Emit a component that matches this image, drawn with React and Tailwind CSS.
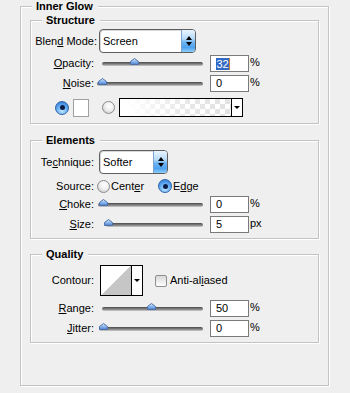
import React from "react";

const U = ({ children }) => (
  <span className="underline underline-offset-[1px] decoration-[1px]">{children}</span>
);

function Group({ title, className, children }) {
  return (
    <div className={"relative border border-[#c3c3c3] shadow-[inset_1px_1px_0_#fff,1px_1px_0_#fff] " + className}>
      <span className="absolute left-[11px] top-[-7px] h-[12px] bg-[#efefef] pl-[4px] pr-[5px] text-[11px] leading-[12px] font-bold whitespace-nowrap">
        {title}
      </span>
      {children}
    </div>
  );
}

function Label({ children, w = "w-[63px]" }) {
  return <span className={"shrink-0 text-right whitespace-nowrap " + w}>{children}</span>;
}

function Select({ value, className }) {
  return (
    <div className={"flex h-[24px] rounded-[4px] border border-[#5e5e5e] bg-white overflow-hidden shadow-[inset_1px_1px_0_#d8d8d8] " + className}>
      <span className="flex-1 pl-[3px] pt-[1px] leading-[21px]">{value}</span>
      <span className="w-[14px] flex flex-col items-center justify-center gap-[2px] border-l border-[#7ea2d0] bg-[linear-gradient(to_bottom,#eaf5fe_0%,#b6daf8_40%,#6db4f3_55%,#4fa2ef_80%,#8fd0fb_100%)]">
        <span className="w-0 h-0 border-x-[3px] border-x-transparent border-b-[4px] border-b-black" />
        <span className="w-0 h-0 border-x-[3px] border-x-transparent border-t-[4px] border-t-black" />
      </span>
    </div>
  );
}

function Slider({ track, knob }) {
  return (
    <div className="relative ml-[3px] w-[106px] h-[17px] flex items-center shrink-0">
      <div className={"h-[4px] rounded-full bg-[linear-gradient(to_bottom,#4a4a4a,#8a8a8a_60%,#cfcfcf)] " + track} />
      <svg className={"absolute top-[3px] " + knob} width="9" height="7" viewBox="0 0 9 7">
        <defs>
          <linearGradient id="kn" x1="0" y1="0" x2="0" y2="1">
            <stop offset="0" stopColor="#d9ecff" />
            <stop offset="0.5" stopColor="#8db8ec" />
            <stop offset="1" stopColor="#4b7fcf" />
          </linearGradient>
        </defs>
        <path d="M4.5 0.5 L8.5 3.5 V6.5 H0.5 V3.5 Z" fill="url(#kn)" stroke="#4c6fa8" strokeWidth="1" />
      </svg>
    </div>
  );
}

function NumBox({ children }) {
  return (
    <div className="ml-[7px] w-[39px] h-[17px] shrink-0 border border-[#7a7a7a] bg-white pl-[5px] leading-[15px] flex items-center">
      {children}
    </div>
  );
}

function SliderRow({ label, track, knob, value, unit = "%", className }) {
  return (
    <div className={"flex items-center h-[17px] " + className}>
      <Label>{label}</Label>
      <Slider track={track} knob={knob} />
      <NumBox>{value}</NumBox>
      <span className="ml-[1px] self-start mt-[1px] leading-[13px]">{unit}</span>
    </div>
  );
}

function Radio({ on, className = "" }) {
  if (on) {
    return (
      <span className={"shrink-0 w-[14px] h-[14px] rounded-full border border-[#2f63a8] bg-[radial-gradient(circle_at_50%_75%,#bfe6ff_0%,#5aa6f0_55%,#2a6ccc_100%)] flex items-center justify-center " + className}>
        <span className="w-[5px] h-[5px] rounded-full bg-[#0c1c48]" />
      </span>
    );
  }
  return (
    <span className={"shrink-0 w-[13px] h-[13px] rounded-full border border-[#8c8c8c] bg-[radial-gradient(circle_at_60%_35%,#ffffff_0%,#f0f0f0_45%,#bdbdbd_100%)] " + className} />
  );
}

export default function App() {
  return (
    <div className="w-[350px] h-[393px] overflow-hidden bg-[#efefef] pt-[6px] pl-[20px] font-['Liberation_Sans',Arial,sans-serif] text-[11px] leading-[13px] text-black">
      <Group title="Inner Glow" className="w-[309px] h-[380px]">
        <Group title="Structure" className="mt-[13px] ml-[9px] w-[289px] h-[104px]">
          <div className="mt-[8px] flex items-center h-[24px]">
            <Label w="w-[66px]">Blen<U>d</U> Mode:</Label>
            <Select value="Screen" className="ml-[2px] w-[97px]" />
          </div>
          <SliderRow
            className="mt-[2px]"
            label={<><U>O</U>pacity:</>}
            track="ml-[5px] w-[101px]"
            knob="left-[33px]"
            value={
              <span className="flex items-center">
                <span className="bg-[#316ac5] text-white h-[12px] leading-[12px] px-[0.5px]">32</span>
                <span className="w-[1px] h-[12px] bg-[#c8843a]" />
              </span>
            }
          />
          <SliderRow
            className="mt-[3px]"
            label={<><U>N</U>oise:</>}
            track="ml-0 w-[106px]"
            knob="left-[1px]"
            value="0"
          />
          <div className="mt-[6px] flex items-center h-[19px]">
            <Radio on className="ml-[24px]" />
            <span className="ml-[4px] w-[16px] h-[18px] border border-[#a0a0a0] bg-white" />
            <Radio className="ml-[13px]" />
            <div className="ml-[4px] w-[124px] h-[19px] border border-black flex bg-white">
              <div className="flex-1 bg-[linear-gradient(to_right,#ffffff_5%,rgba(255,255,255,0.2)_60%,rgba(255,255,255,0)),repeating-conic-gradient(#e2e2e2_0_25%,#ffffff_0_50%)] [background-size:100%_100%,10px_10px]" />
              <div className="w-[11px] border-l border-black flex items-center justify-center">
                <span className="w-0 h-0 border-x-[3px] border-x-transparent border-t-[3px] border-t-black" />
              </div>
            </div>
          </div>
        </Group>

        <Group title="Elements" className="mt-[16px] ml-[9px] w-[289px] h-[99px]">
          <div className="mt-[9px] flex items-center h-[24px]">
            <Label>Te<U>c</U>hnique:</Label>
            <Select value="Softer" className="ml-[5px] w-[69px]" />
          </div>
          <div className="mt-[5px] flex items-center h-[14px]">
            <Label>Source:</Label>
            <Radio className="ml-[3px]" />
            <span className="ml-[1px] w-[47px]">Cent<U>e</U>r</span>
            <Radio on />
            <span className="ml-[1px]">E<U>d</U>ge</span>
          </div>
          <SliderRow
            className="mt-[3px]"
            label={<><U>C</U>hoke:</>}
            track="ml-[1px] w-[105px]"
            knob="left-[2px]"
            value="0"
          />
          <SliderRow
            className="mt-[3px]"
            label={<><U>S</U>ize:</>}
            track="ml-[9px] w-[97px]"
            knob="left-[7px]"
            value="5"
            unit="px"
          />
        </Group>

        <Group title="Quality" className="mt-[15px] ml-[9px] w-[289px] h-[89px]">
          <div className="mt-[10px] flex items-center h-[31px]">
            <Label>Contour:</Label>
            <div className="ml-[6px] w-[43px] h-[31px] border border-black flex bg-white">
              <div className="w-[30px] h-full bg-[linear-gradient(to_top_left,#c6c6c6_50%,#ffffff_50%)]" />
              <div className="flex-1 border-l border-black flex items-center justify-center">
                <span className="w-0 h-0 border-x-[3px] border-x-transparent border-t-[3px] border-t-black" />
              </div>
            </div>
            <span className="ml-[12px] w-[12px] h-[12px] rounded-[2px] border border-[#8e8e8e] bg-[linear-gradient(to_bottom,#d8d8d8,#ffffff)]" />
            <span className="ml-[3px]">Anti-al<U>i</U>ased</span>
          </div>
          <SliderRow
            className="mt-[4px]"
            label={<><U>R</U>ange:</>}
            track="ml-[5px] w-[101px]"
            knob="left-[50px]"
            value="50"
          />
          <SliderRow
            className="mt-[3px]"
            label={<><U>J</U>itter:</>}
            track="ml-[2px] w-[104px]"
            knob="left-[2px]"
            value="0"
          />
        </Group>
      </Group>
    </div>
  );
}
